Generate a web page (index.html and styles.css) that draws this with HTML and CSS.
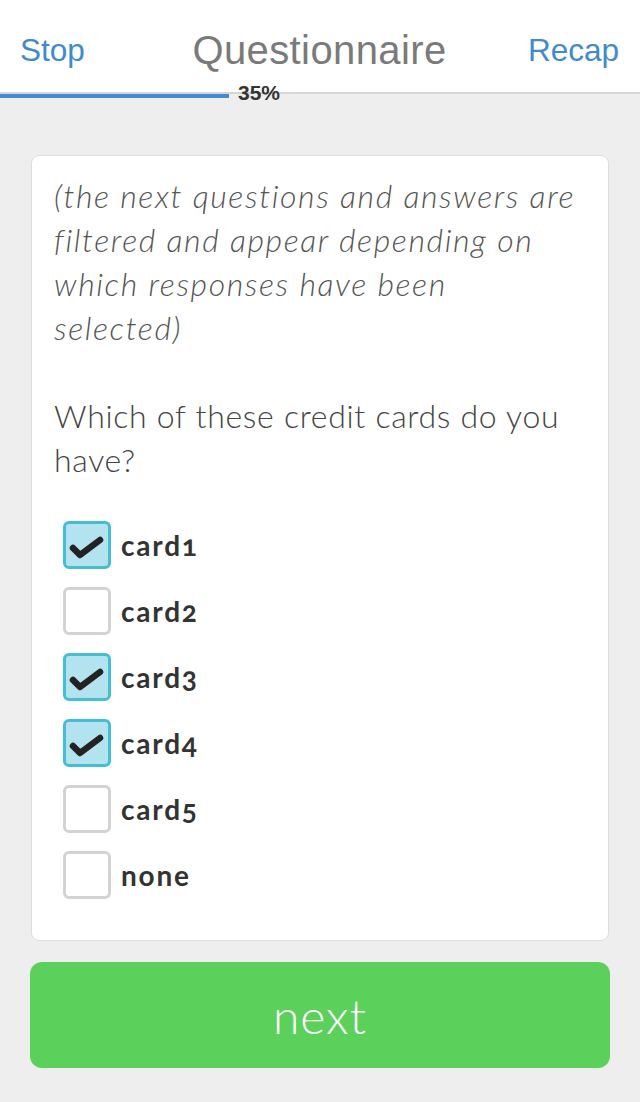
FILE: index.html
```html
<!DOCTYPE html>
<html>
<head>
<meta charset="utf-8">
<link rel="stylesheet" href="styles.css">
</head>
<body>
<header class="topbar">
  <a class="nav-link">Stop</a>
  <h1 class="title">Questionnaire</h1>
  <a class="nav-link nav-right">Recap</a>
</header>
<div class="progress">
  <div class="progress-fill" style="width: 229px"></div>
  <span class="progress-label">35%</span>
</div>
<main class="content">
  <section class="card">
    <p class="note">(the next questions and answers are filtered and appear depending on which responses have been selected)</p>
    <p class="question">Which of these credit cards do you have?</p>
    <ul class="options">
      <li class="option"><span class="box checked"><svg viewBox="0 0 48 48"><path d="M10 27 L17 34 L37 19" /></svg></span><span class="label">card1</span></li>
      <li class="option"><span class="box"></span><span class="label">card2</span></li>
      <li class="option"><span class="box checked"><svg viewBox="0 0 48 48"><path d="M10 27 L17 34 L37 19" /></svg></span><span class="label">card3</span></li>
      <li class="option"><span class="box checked"><svg viewBox="0 0 48 48"><path d="M10 27 L17 34 L37 19" /></svg></span><span class="label">card4</span></li>
      <li class="option"><span class="box"></span><span class="label">card5</span></li>
      <li class="option"><span class="box"></span><span class="label">none</span></li>
    </ul>
  </section>
  <button class="next">next</button>
</main>
</body>
</html>
```
FILE: styles.css
```css
* { box-sizing: border-box; }
html, body { margin: 0; padding: 0; }
body {
  background: #eeeeee;
  width: 640px;
  height: 1102px;
  overflow: hidden;
  font-family: "Lato", "Liberation Sans", sans-serif;
}
.topbar {
  background: #ffffff;
  height: 92px;
  display: grid;
  grid-template-columns: 1fr auto 1fr;
  align-items: center;
  padding: 8px 21px 0 20px;
}
.nav-link {
  font-family: "Liberation Sans", Arial, sans-serif;
  font-size: 31.5px;
  color: #3f8ad0;
}
.nav-right {
  justify-self: end;
}
.title {
  margin: 0;
  font-family: "Liberation Sans", Arial, sans-serif;
  font-weight: normal;
  font-size: 40px;
  color: #7a7a7a;
  letter-spacing: 0.4px;
}
.progress {
  position: relative;
  height: 4px;
  border-top: 2px solid #d6d6d6;
  background: #eeeeee;
}
.progress-fill {
  position: absolute;
  left: 0;
  top: 0;
  height: 4px;
  background: #428bd0;
}
.progress-label {
  position: absolute;
  left: 238px;
  top: -11px;
  font-family: "Liberation Sans", Arial, sans-serif;
  font-weight: bold;
  font-size: 21px;
  color: #333333;
  line-height: 20px;
}
.content {
  padding: 59px 30px 0 30px;
}
.card {
  background: #ffffff;
  border: 1px solid #dcdcdc;
  border-radius: 8px;
  margin: 0 1px;
  height: 786px;
  padding: 18px 22px 0 22px;
}
.note {
  margin: 0 10px 0 0;
  font-style: italic;
  font-weight: 300;
  font-size: 32px;
  letter-spacing: 1.6px;
  line-height: 44px;
  color: #555555;
}
.question {
  margin: 44px 0 0 0;
  font-weight: 300;
  font-size: 32px;
  letter-spacing: 0.7px;
  line-height: 44px;
  color: #444444;
}
.options {
  list-style: none;
  margin: 30px 0 0 0;
  padding: 0 0 0 9px;
}
.option {
  display: flex;
  align-items: center;
  height: 66px;
  gap: 10px;
}
.box {
  width: 48px;
  height: 48px;
  border: 3px solid #d3d3d3;
  border-radius: 6px;
  background: #ffffff;
  display: flex;
  align-items: center;
  justify-content: center;
}
.box.checked {
  border-color: #45bdd5;
  background: #b3e3ee;
}
.box svg {
  width: 48px;
  height: 48px;
  flex: none;
}
.box svg path {
  fill: none;
  stroke: #222222;
  stroke-width: 6.5;
  stroke-linecap: round;
  stroke-linejoin: round;
}
.label {
  font-weight: bold;
  font-size: 28px;
  letter-spacing: 1.8px;
  color: #333333;
  font-feature-settings: "onum" 1;
  font-variant-numeric: oldstyle-nums;
}
.next {
  display: block;
  width: 580px;
  height: 106px;
  margin: 21px 0 0 0;
  border: none;
  border-radius: 12px;
  background: #5bd05b;
  color: #ffffff;
  font-family: "Lato", "Liberation Sans", sans-serif;
  font-weight: 300;
  font-size: 48px;
  letter-spacing: 1px;
}
```
